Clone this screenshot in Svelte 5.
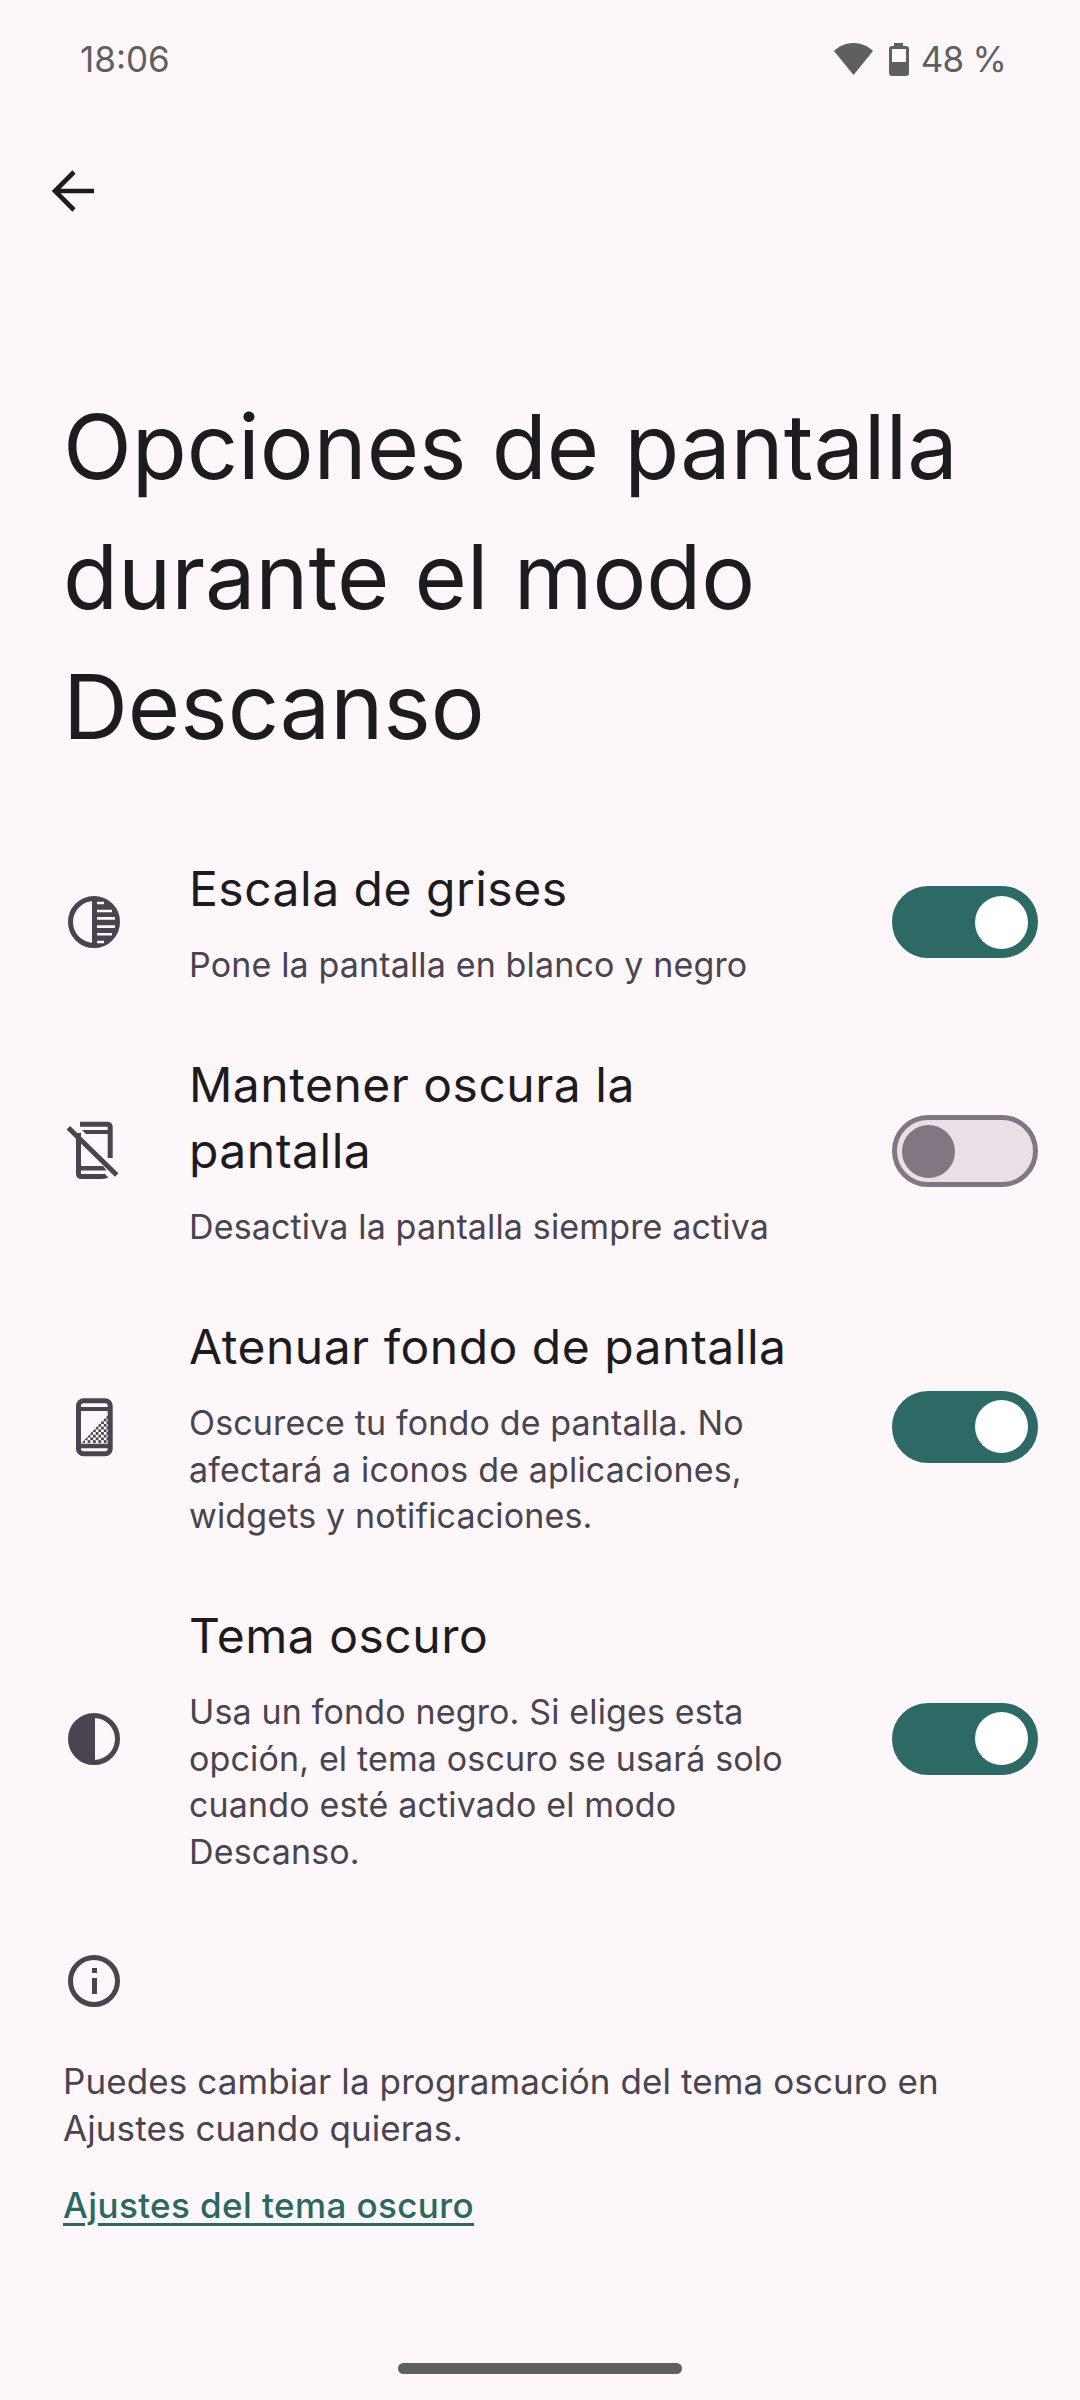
<script>
  const rows = [
    { icon: 'gray', title: ['Escala de grises'], sub: ['Pone la pantalla en blanco y negro'], on: true },
    { icon: 'phone', title: ['Mantener oscura la', 'pantalla'], sub: ['Desactiva la pantalla siempre activa'], on: false },
    { icon: 'dim', title: ['Atenuar fondo de pantalla'], sub: ['Oscurece tu fondo de pantalla. No', 'afectará a iconos de aplicaciones,', 'widgets y notificaciones.'], on: true },
    { icon: 'dark', title: ['Tema oscuro'], sub: ['Usa un fondo negro. Si eliges esta', 'opción, el tema oscuro se usará solo', 'cuando esté activado el modo', 'Descanso.'], on: true }
  ];
</script>

<div class="page">
  <div class="status">
    <span>18:06</span>
    <div class="status-right">
      <svg width="39" height="32" viewBox="0 0 39 32"><path d="M19.5 32 0 8C5 3 12 0 19.5 0S34 3 39 8z" fill="#5f5f5f"/></svg>
      <svg class="batt" width="20" height="33" viewBox="0 0 20 33"><path fill-rule="evenodd" d="M5 0h9v3h3q3 0 3 3v24q0 3-3 3H3q-3 0-3-3V6q0-3 3-3h2zM3 6v13h14V6z" fill="#5f5f5f"/></svg>
      <span class="pct">48 %</span>
    </div>
  </div>
  <div class="nav">
    <svg width="48" height="48" viewBox="0 0 48 48"><path d="M44 24H6M24 5 5 24l19 19" fill="none" stroke="#1d1b20" stroke-width="4.6"/></svg>
  </div>
  <h1>Opciones de pantalla<br>durante el modo<br>Descanso</h1>
  <div class="list">
    {#each rows as r}
      <div class="row">
        <div class="icon">
          {#if r.icon === 'gray'}
            <svg width="56" height="56" viewBox="0 0 56 56">
              <circle cx="28" cy="28" r="23.5" fill="none" stroke="#4a4350" stroke-width="5"/>
              <path d="M26 4h5v48h-5z" fill="#4a4350"/>
              <path d="M30 6a22 22 0 0 1 0 44z" fill="#4a4350"/>
              <path d="M31 9h7M31 17h15M31 24.4h18M31 32.6h18M31 40.3h15M31 48h7" stroke="#fef7fa" stroke-width="2.6"/>
            </svg>
          {:else if r.icon === 'phone'}
            <svg width="56" height="60" viewBox="0 0 56 60">
              <path d="M14 3.2h27.2q3 0 3 3V37" fill="none" stroke="#4a4350" stroke-width="5"/>
              <path d="M12.5 12v40.500q0 3 3 3h21q3 0 4-1" fill="none" stroke="#4a4350" stroke-width="5"/>
              <path d="M16 9h30v4H20zM12 45h25l3.500 4.500H12z" fill="#4a4350"/>
              <path d="M2.300 6.700 50.700 54" stroke="#4a4350" stroke-width="5"/>
            </svg>
          {:else if r.icon === 'dim'}
            <svg width="56" height="60" viewBox="0 0 56 60">
              <defs><pattern id="chk" width="5.400" height="5.400" patternUnits="userSpaceOnUse"><rect width="2.700" height="2.700" fill="#4a4350"/><rect x="2.700" y="2.700" width="2.700" height="2.700" fill="#4a4350"/></pattern></defs>
              <rect x="12.500" y="3.800" width="31.700" height="53" rx="5" fill="none" stroke="#4a4350" stroke-width="5"/>
              <path d="M12 10h33v4H12zM12 46.700h33v4.600H12z" fill="#4a4350"/>
              <path d="M15.700 46 42.300 17.300V46z" fill="url(#chk)"/>
            </svg>
          {:else}
            <svg width="56" height="56" viewBox="0 0 56 56">
              <circle cx="28" cy="28" r="23.500" fill="none" stroke="#4a4350" stroke-width="5"/>
              <path d="M29 4H28a24 24 0 0 0 0 48h1z" fill="#4a4350"/>
            </svg>
          {/if}
        </div>
        <div class="text">
          <div class="title">{#each r.title as t}<div>{t}</div>{/each}</div>
          <div class="sub">{#each r.sub as t}<div>{t}</div>{/each}</div>
        </div>
        <div class="switch" class:on={r.on}><div class="thumb"></div></div>
      </div>
    {/each}
  </div>
  <div class="info">
    <svg width="56" height="56" viewBox="0 0 56 56">
      <circle cx="28" cy="28" r="23.500" fill="none" stroke="#4a4350" stroke-width="5"/>
      <path d="M26 25h5v16h-5zM26 15h5v5h-5z" fill="#4a4350"/>
    </svg>
  </div>
  <p class="note">Puedes cambiar la programación del tema oscuro en<br>Ajustes cuando quieras.</p>
  <span class="link">Ajustes del tema oscuro</span>
  <div class="handle-wrap"><div class="handle"></div></div>
</div>

<style>
  :global(body) { margin: 0; background: #fef7fa; }
  .page { width: 1080px; height: 2400px; background: #fef7fa; font-family: Inter, "Noto Sans", sans-serif; overflow: hidden; display: flex; flex-direction: column; position: relative; }
  .status { height: 143px; box-sizing: border-box; padding: 41px 74px 0 80px; display: flex; justify-content: space-between; align-items: flex-start; font-size: 35px; color: #5f5f5f; line-height: 36px; }
  .status-right { display: flex; align-items: center; gap: 16px; }
  .pct { margin-left: -4px; letter-spacing: -0.8px; }
  .nav { height: 96px; padding-left: 50px; display: flex; align-items: center; }
  h1 { margin: 143px 0 0 63px; font-weight: 400; font-size: 90px; line-height: 130px; color: #1d1b20; letter-spacing: -0.1px; }
  .list { margin-top: 52px; display: flex; flex-direction: column; }
  .row { display: flex; align-items: center; padding: 31.5px 42px 31.5px 66px; }
  .icon { width: 56px; flex: none; display: flex; justify-content: center; }
  .text { flex: 1; margin-left: 67px; }
  .title { font-size: 48px; line-height: 66px; color: #1d1b20; letter-spacing: 0.5px; }
  .sub { font-size: 34px; line-height: 46.500px; color: #4a4350; margin-top: 20.500px; letter-spacing: 0.15px; }
  .switch { flex: none; width: 146px; height: 72px; border-radius: 36px; box-sizing: border-box; background: #e8dfe7; border: 5px solid #827682; display: flex; align-items: center; padding-left: 5px; }
  .thumb { width: 53px; height: 53px; border-radius: 50%; background: #827682; }
  .switch.on { background: #2d6a66; border-color: #2d6a66; justify-content: flex-end; padding: 0 5px 0 0; }
  .on .thumb { background: #fff; }
  .info { margin: 46.500px 0 0 66px; height: 56px; }
  .note { margin: 49px 0 0 63px; font-size: 35px; line-height: 46.500px; color: #4a4350; letter-spacing: 0.1px; }
  .link { margin: 30.500px 0 0 63px; font-size: 35px; color: #2c6764; text-decoration: underline; text-decoration-thickness: 3px; text-underline-offset: 5px; line-height: 46px; font-weight: 500; letter-spacing: 0.4px; }
  .handle-wrap { position: absolute; left: 0; right: 0; bottom: 26px; display: flex; justify-content: center; }
  .handle { width: 284px; height: 11px; border-radius: 6px; background: #5f5f62; }
</style>
